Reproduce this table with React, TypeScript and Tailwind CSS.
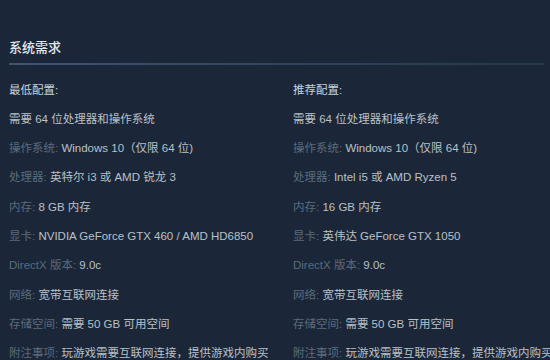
import React from "react";

type Row = { label?: string; value: string; head?: boolean; plain?: boolean };

const left: Row[] = [
  { value: "最低配置:", head: true },
  { value: "需要 64 位处理器和操作系统", plain: true },
  { label: "操作系统:", value: "Windows 10（仅限 64 位)" },
  { label: "处理器:", value: "英特尔 i3 或 AMD 锐龙 3" },
  { label: "内存:", value: "8 GB 内存" },
  { label: "显卡:", value: "NVIDIA GeForce GTX 460 / AMD HD6850" },
  { label: "DirectX 版本:", value: "9.0c" },
  { label: "网络:", value: "宽带互联网连接" },
  { label: "存储空间:", value: "需要 50 GB 可用空间" },
  { label: "附注事项:", value: "玩游戏需要互联网连接，提供游戏内购买" },
];

const right: Row[] = [
  { value: "推荐配置:", head: true },
  { value: "需要 64 位处理器和操作系统", plain: true },
  { label: "操作系统:", value: "Windows 10（仅限 64 位)" },
  { label: "处理器:", value: "Intel i5 或 AMD Ryzen 5" },
  { label: "内存:", value: "16 GB 内存" },
  { label: "显卡:", value: "英伟达 GeForce GTX 1050" },
  { label: "DirectX 版本:", value: "9.0c" },
  { label: "网络:", value: "宽带互联网连接" },
  { label: "存储空间:", value: "需要 50 GB 可用空间" },
  { label: "附注事项:", value: "玩游戏需要互联网连接，提供游戏内购买" },
];

function Col({ rows }: { rows: Row[] }) {
  return (
    <div className="flex flex-col min-w-0 overflow-hidden">
      {rows.map((r, i) => (
        <div
          key={i}
          className="h-[29.33px] leading-[29.33px] whitespace-nowrap overflow-hidden text-[11.5px]"
        >
          {r.head ? (
            <span className="text-[#c7d2db]">{r.value}</span>
          ) : r.plain ? (
            <span className="text-[#b9c0c7]">{r.value}</span>
          ) : (
            <>
              <span className="text-[#5a6b7d]">{r.label}</span>
              <span className="text-[#b9c0c7]"> {r.value}</span>
            </>
          )}
        </div>
      ))}
    </div>
  );
}

export default function App() {
  return (
    <div
      className="w-[550px] h-[360px] overflow-hidden bg-[#1b2738] pl-[9px] pt-[40px]"
      style={{ fontFamily: '"Liberation Sans", "Noto Sans CJK SC", sans-serif' }}
    >
      <div className="text-[13px] leading-[16px] font-medium text-[#e2e8ee]">系统需求</div>
      <div className="mt-[7px] h-[2px] w-[535px] bg-gradient-to-r from-[#3d5774] via-[#2f455d] to-[#26384b]" />
      <div className="mt-[10.5px] grid grid-cols-[284px_257px]">
        <Col rows={left} />
        <Col rows={right} />
      </div>
    </div>
  );
}
